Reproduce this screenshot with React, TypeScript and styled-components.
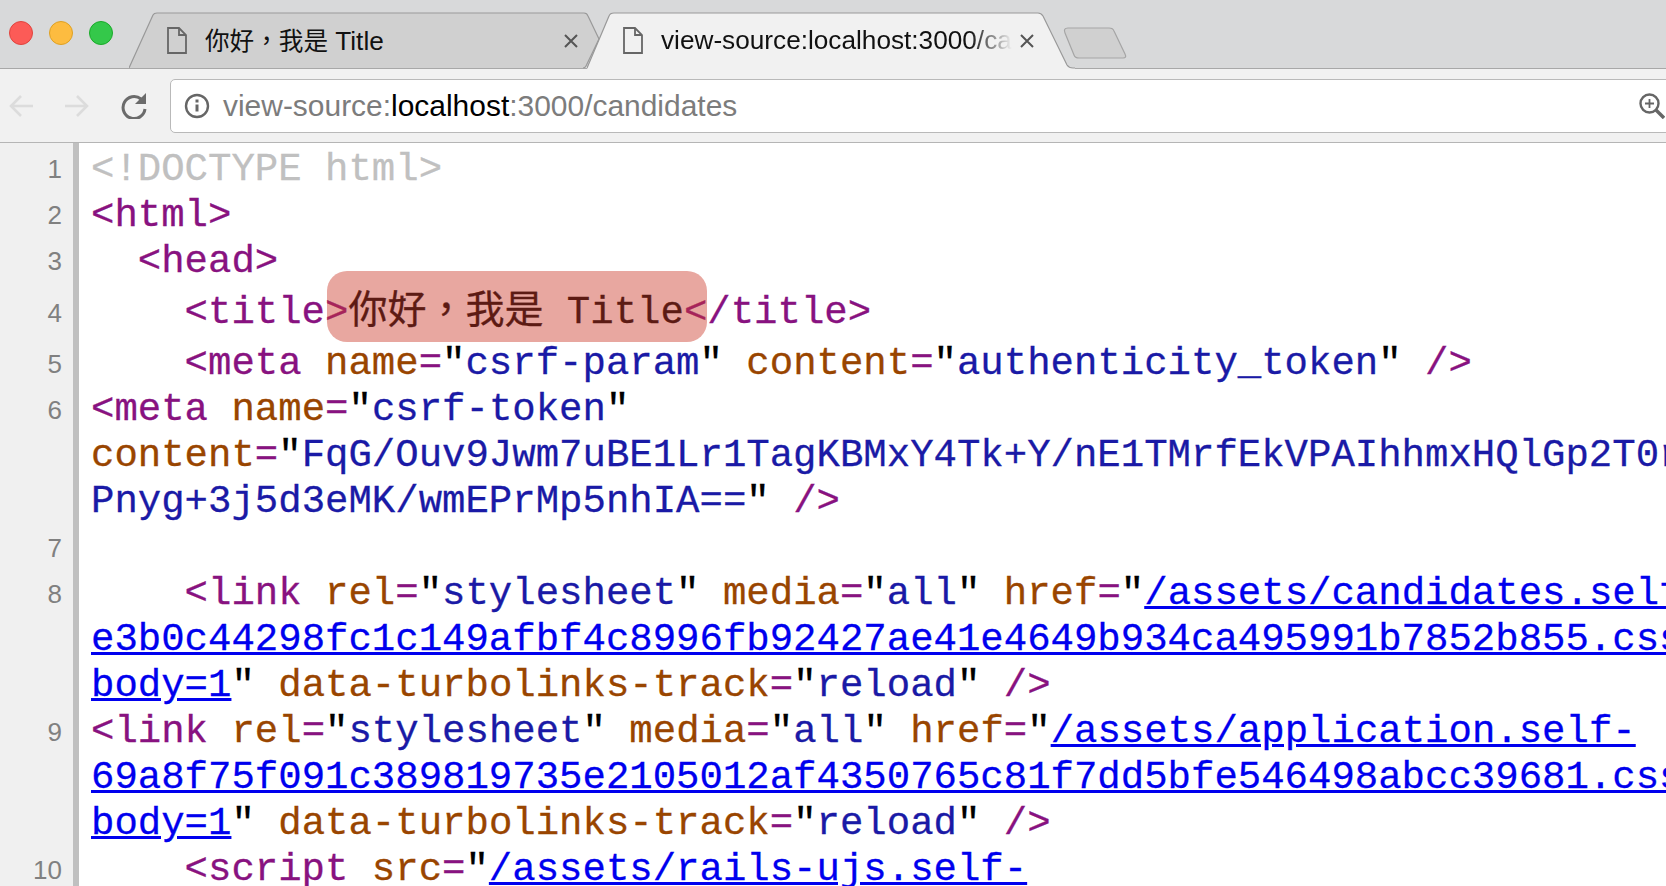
import React from "react";
import styled, { createGlobalStyle } from "styled-components";

const Global = createGlobalStyle`
  html, body { margin: 0; padding: 0; height: 100%; overflow: hidden; background: #fff; }
  #root { height: 100%; }
`;

const Page = styled.div`
  width: 1666px; height: 886px; overflow: hidden; display: flex; flex-direction: column;
  font-family: "Liberation Sans", "Noto Sans CJK TC", sans-serif;
`;
const TabStrip = styled.div`
  height: 69px; flex: none; display: flex; align-items: flex-end; padding-left: 9px; box-sizing: border-box;
  background: #d8d9da; border-bottom: 1px solid #a8a8a8; position: relative;
`;
const Lights = styled.div`display: flex; gap: 16px; align-self: flex-start; margin-top: 21px; width: 120px; flex: none;`;
const Light = styled.div<{ $c: string; $b: string }>`
  width: 24px; height: 24px; border-radius: 50%; background: ${p => p.$c}; border: 1px solid ${p => p.$b}; box-sizing: border-box;
`;
const Tab = styled.div<{ $w: number; $mr: number; $z: number }>`
  width: ${p => p.$w}px; height: 57px; flex: none; position: relative; display: flex; align-items: center;
  margin-right: ${p => p.$mr}px; margin-bottom: -1px; z-index: ${p => p.$z};
`;
const TabShape = styled.svg`position: absolute; inset: 0; width: 100%; height: 100%;`;
const TabBody = styled.div<{ $pad: number }>`
  position: relative; display: flex; align-items: center; width: 100%; padding-left: ${p => p.$pad}px; box-sizing: border-box; height: 100%;
`;
const TabTitle = styled.div<{ $w: number; $ml: number; $mt: number; $fade?: boolean }>`
  width: ${p => p.$w}px; margin-left: ${p => p.$ml}px; font-size: 26.2px; color: #111; white-space: nowrap; overflow: hidden; flex: none; margin-top: ${p => p.$mt}px;
  ${p => (p.$fade ? "-webkit-mask-image: linear-gradient(to right, #000 88%, transparent 100%); mask-image: linear-gradient(to right, #000 88%, transparent 100%);" : "")}
`;
const TabCjk = styled.span`font-size: 24.6px;`;
const TabClose = styled.svg<{ $l: number }>`position: absolute; left: ${p => p.$l}px; top: 22px; width: 14px; height: 14px;`;
const DocIcon = styled.svg`width: 20px; height: 27px; flex: none;`;
const NewTab = styled.svg`width: 66px; height: 33px; flex: none; align-self: flex-start; margin: 27px 0 0 -12px; position: relative; z-index: 0;`;
const Toolbar = styled.div`
  height: 74px; flex: none; display: flex; align-items: center; background: #f1f1f1; border-bottom: 1px solid #b5b5b5; box-sizing: border-box; position: relative;
`;
const NavIcon = styled.svg<{ $w: number; $ml: number }>`width: ${p => p.$w}px; height: 26px; flex: none; margin-left: ${p => p.$ml}px;`;
const Omnibox = styled.div`
  flex: 1; margin-left: 23px; margin-right: -10px; height: 54px; background: #fff; border: 1px solid #b9b9b9; border-radius: 5px; box-sizing: border-box;
  display: flex; align-items: center; padding-left: 13px; position: relative;
`;
const InfoIcon = styled.svg`width: 26px; height: 26px; flex: none;`;
const Url = styled.div`font-size: 29.95px; color: #7c7c7c; margin-left: 13px; white-space: nowrap;`;
const UrlHost = styled.span`color: #000;`;
const Zoom = styled.svg`position: absolute; right: 0; top: 13px; width: 26px; height: 26px; margin-right: 10px;`;
const Source = styled.div`flex: 1; overflow: hidden; display: flex; flex-direction: column; background: #fff;`;
const Row = styled.div`display: flex; flex: none;`;
const Gutter = styled.div<{ $top?: number }>`
  width: 73px; flex: none; background: #f0f0f0; padding-right: 11px; box-sizing: border-box; text-align: right; color: #808080;
  font-size: 26px; font-family: "Liberation Sans", sans-serif; padding-top: ${p => p.$top ?? 8}px; line-height: 30px;
`;
const Rail = styled.div`width: 6px; flex: none; background: #c0c0c0; margin-right: 12px;`;
const Code = styled.div<{ $top?: number }>`min-width: 0; flex: 1; padding-top: ${p => p.$top ?? 0}px;`;
const Line = styled.div<{ $h?: number; $i?: number }>`
  height: ${p => p.$h ?? 46}px; line-height: ${p => p.$h ?? 46}px; padding-left: ${p => (p.$i ?? 0) * 23.4}px; white-space: pre;
  font-family: "Liberation Mono", monospace; font-size: 39px; color: #000; -webkit-text-stroke: .3px currentColor;
`;
const Tag = styled.span`color: #881280;`;
const Doc = styled.span`color: #c0c0c0;`;
const Attr = styled.span`color: #994500;`;
const Val = styled.span`color: #1a1aa6;`;
const Lnk = styled.a`color: #0000ee; text-decoration: underline;`;
const Hl = styled.span`position: relative; display: inline-block;`;
const HlBox = styled.span`
  position: absolute; left: 2px; right: 0; top: -14px; bottom: -1px; background: rgba(205, 60, 45, .45); border-radius: 20px;
`;
const Cjk = styled.span`font-family: "Liberation Mono", "Noto Sans CJK TC", monospace; color: #000;`;

const Doc1 = () => (
  <DocIcon viewBox="0 0 20 27" fill="none" stroke="#666" strokeWidth="1.8">
    <path d="M1 1h11l7 7v18H1z" /><path d="M12 1v7h7" />
  </DocIcon>
);
const Close = ({ l }: { l: number }) => (
  <TabClose $l={l} viewBox="0 0 14 14" fill="none" stroke="#555" strokeWidth="2"><path d="M1 1l12 12M13 1L1 13" /></TabClose>
);

export default function App() {
  return (
    <Page>
      <Global />
      <TabStrip>
        <Lights>
          <Light $c="#fc5b57" $b="#e0443e" />
          <Light $c="#fdbc40" $b="#dea123" />
          <Light $c="#34c84a" $b="#1aab29" />
        </Lights>
        <Tab $w={471} $mr={-13} $z={1}>
          <TabShape viewBox="0 0 471 57">
            <path d="M0 56 L24 3 Q25 1 28 1 L455 1 Q458 1 459 4 L470 27 L457 54 Q456 56 454 56" fill="#d0d0d0" stroke="#999" strokeWidth="1.2" />
          </TabShape>
          <TabBody $pad={38}>
            <Doc1 />
            <TabTitle $w={300} $ml={18} $mt={-4}><TabCjk>你好，我是</TabCjk> Title</TabTitle>
          </TabBody>
          <Close l={435} />
        </Tab>
        <Tab $w={488} $mr={0} $z={2}>
          <TabShape viewBox="0 0 488 57">
            <path d="M0 57 L22 4 Q23 1 27 1 L451 1 Q454 1 456 4 L480 53 Q482 56 486 56 L488 56 V57 Z" fill="#f1f1f1" />
            <path d="M0 56 L22 4 Q23 1 27 1 L451 1 Q454 1 456 4 L480 53 Q482 56 486 56 L488 56" fill="none" stroke="#999" strokeWidth="1.2" />
          </TabShape>
          <TabBody $pad={36}>
            <Doc1 />
            <TabTitle $fade $w={351} $ml={18} $mt={-1}>view-source:localhost:3000/candidates</TabTitle>
          </TabBody>
          <Close l={433} />
        </Tab>
        <NewTab viewBox="0 0 66 33" fill="#d0d0d0" stroke="#a5a5a5" strokeWidth="1.2">
          <path d="M2 6 Q0 1 5 1 L46 1 Q50 1 51 4 L62 27 Q64 31 60 31 L16 31 Q12 31 11 28Z" />
        </NewTab>
      </TabStrip>
      <Toolbar>
        <NavIcon $w={26} $ml={8} viewBox="0 0 26 26" fill="none" stroke="#dcdcdc" strokeWidth="2.6"><path d="M25 13H3M13 3L3 13l10 10" /></NavIcon>
        <NavIcon $w={26} $ml={30} viewBox="0 0 26 26" fill="none" stroke="#dcdcdc" strokeWidth="2.6"><path d="M1 13h22M13 3l10 10-10 10" /></NavIcon>
        <NavIcon $w={27} $ml={30} viewBox="0 0 27 26" fill="none" stroke="#6b6b6b" strokeWidth="3">
          <path d="M21 6A11 11 0 1 0 25 16" /><path d="M26 0v11H15z" fill="#6b6b6b" stroke="none" />
        </NavIcon>
        <Omnibox>
          <InfoIcon viewBox="0 0 26 26" fill="none" stroke="#666" strokeWidth="2.4">
            <circle cx="13" cy="13" r="11" />
            <path d="M13 11.5v7" strokeWidth="3" /><path d="M13 6.5v3" strokeWidth="3" />
          </InfoIcon>
          <Url>view-source:<UrlHost>localhost</UrlHost>:3000/candidates</Url>
          <Zoom viewBox="0 0 26 26" fill="none" stroke="#666" strokeWidth="2.4">
            <circle cx="10.5" cy="10.5" r="9" /><path d="M17 17l8 8" strokeWidth="3.4" /><path d="M10.5 6v9M6 10.5h9" strokeWidth="1.8" />
          </Zoom>
        </Omnibox>
      </Toolbar>
      <Source>
        <Row><Gutter $top={11}>1</Gutter><Rail /><Code $top={4}><Line><Doc>{"<!DOCTYPE html>"}</Doc></Line></Code></Row>
        <Row><Gutter $top={7}>2</Gutter><Rail /><Code><Line><Tag>{"<html>"}</Tag></Line></Code></Row>
        <Row><Gutter $top={7}>3</Gutter><Rail /><Code><Line $i={2}><Tag>{"<head>"}</Tag></Line></Code></Row>
        <Row><Gutter $top={13}>4</Gutter><Rail /><Code><Line $h={56} $i={4}><Tag>{"<title"}</Tag><Hl><Tag>{">"}</Tag><Cjk>你好，我是 Title</Cjk><Tag>{"<"}</Tag><HlBox /></Hl><Tag>{"/title>"}</Tag></Line></Code></Row>
        <Row><Gutter>5</Gutter><Rail /><Code><Line $i={4}><Tag>{"<meta "}</Tag><Attr>name</Attr><Tag>=</Tag>"<Val>csrf-param</Val>" <Attr>content</Attr><Tag>=</Tag>"<Val>authenticity_token</Val>" <Tag>{"/>"}</Tag></Line></Code></Row>
        <Row><Gutter>6</Gutter><Rail /><Code>
          <Line><Tag>{"<meta "}</Tag><Attr>name</Attr><Tag>=</Tag>"<Val>csrf-token</Val>"</Line>
          <Line><Attr>content</Attr><Tag>=</Tag>"<Val>FqG/Ouv9Jwm7uBE1Lr1TagKBMxY4Tk+Y/nE1TMrfEkVPAIhhmxHQlGp2T0r</Val></Line>
          <Line><Val>Pnyg+3j5d3eMK/wmEPrMp5nhIA==</Val>" <Tag>{"/>"}</Tag></Line>
        </Code></Row>
        <Row><Gutter>7</Gutter><Rail /><Code><Line /></Code></Row>
        <Row><Gutter>8</Gutter><Rail /><Code>
          <Line $i={4}><Tag>{"<link "}</Tag><Attr>rel</Attr><Tag>=</Tag>"<Val>stylesheet</Val>" <Attr>media</Attr><Tag>=</Tag>"<Val>all</Val>" <Attr>href</Attr><Tag>=</Tag>"<Lnk>/assets/candidates.self-</Lnk></Line>
          <Line><Lnk>e3b0c44298fc1c149afbf4c8996fb92427ae41e4649b934ca495991b7852b855.css?</Lnk></Line>
          <Line><Lnk>body=1</Lnk>" <Attr>data-turbolinks-track</Attr><Tag>=</Tag>"<Val>reload</Val>" <Tag>{"/>"}</Tag></Line>
        </Code></Row>
        <Row><Gutter>9</Gutter><Rail /><Code>
          <Line><Tag>{"<link "}</Tag><Attr>rel</Attr><Tag>=</Tag>"<Val>stylesheet</Val>" <Attr>media</Attr><Tag>=</Tag>"<Val>all</Val>" <Attr>href</Attr><Tag>=</Tag>"<Lnk>/assets/application.self-</Lnk></Line>
          <Line><Lnk>69a8f75f091c389819735e2105012af4350765c81f7dd5bfe546498abcc39681.css?</Lnk></Line>
          <Line><Lnk>body=1</Lnk>" <Attr>data-turbolinks-track</Attr><Tag>=</Tag>"<Val>reload</Val>" <Tag>{"/>"}</Tag></Line>
        </Code></Row>
        <Row><Gutter>10</Gutter><Rail /><Code><Line $i={4}><Tag>{"<script "}</Tag><Attr>src</Attr><Tag>=</Tag>"<Lnk>/assets/rails-ujs.self-</Lnk></Line></Code></Row>
      </Source>
    </Page>
  );
}
